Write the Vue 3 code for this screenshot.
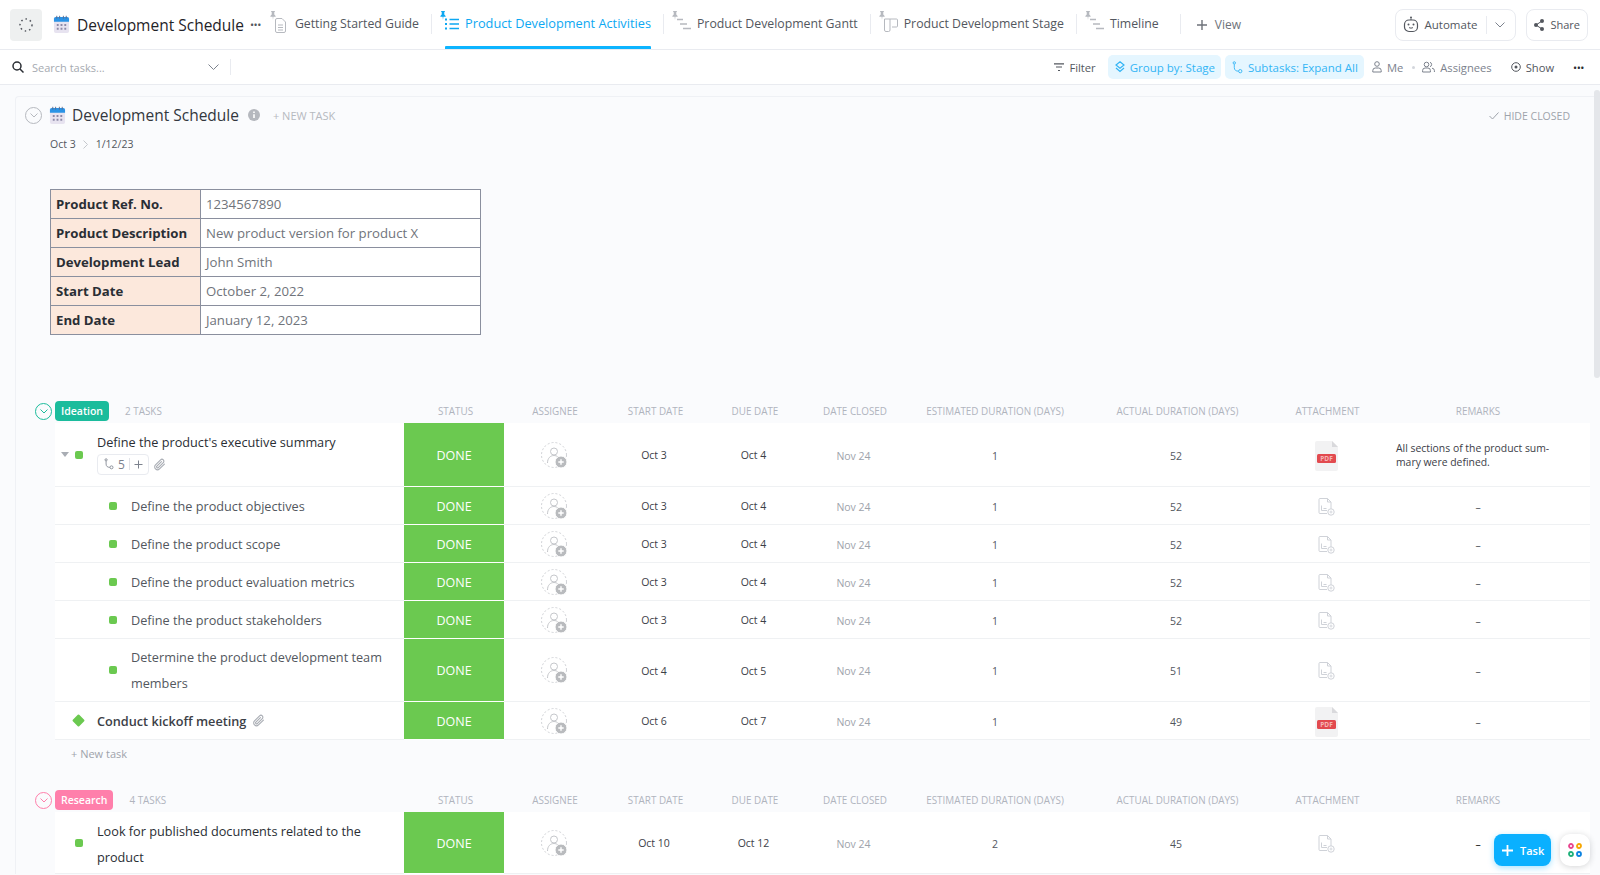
<template>
<div class="page">
    <svg class="defs" width="0" height="0">
        <symbol id="pin" viewBox="0 0 8 12">
            <path d="M1.5 0h5v1l-.8.6v3L7.5 6.500v1h-3L4 12l-.5-4.500h-3v-1l1.800-1.900v-3L1.500 1z" fill="currentColor" />
        </symbol>
        <symbol id="person" viewBox="0 0 28 28">
            <circle cx="13" cy="13" r="12.500" fill="none" stroke="#d0d2d6" stroke-dasharray="2 2" />
            <circle cx="13" cy="9.500" r="3.500" fill="#fff" stroke="#c5c7cb" />
            <path d="M6.500 21c0-5 3-7.500 6.500-7.500 1.500 0 2.800.4 3.800 1.200" fill="none" stroke="#c5c7cb" />
            <circle cx="20" cy="20" r="6" fill="#b9bbbe" stroke="#fff" />
            <path d="M20 17.300v5.400M17.300 20h5.400" stroke="#fff" stroke-width="1.400" />
        </symbol>
        <symbol id="clip" viewBox="0 0 14 14">
            <path d="M12.300 6.500 7 11.800a3 3 0 0 1-4.300-4.300l5.500-5.500a2 2 0 0 1 2.900 2.900L5.700 10.300a1 1 0 0 1-1.500-1.500l4.900-4.900" fill="none" stroke="#a9adb4" stroke-width="1.200" stroke-linecap="round" />
        </symbol>
        <symbol id="subtask" viewBox="0 0 12 14">
            <circle cx="2.500" cy="2" r="1.300" fill="none" stroke="currentColor" />
            <circle cx="9" cy="11" r="1.800" fill="none" stroke="currentColor" />
            <path d="M2.500 3.500V7c0 3 2 4 4.500 4" fill="none" stroke="currentColor" />
        </symbol>
        <symbol id="cal" viewBox="0 0 18 20">
            <rect x="1" y="2" width="16" height="17" rx="2" fill="#e7e3f0" />
            <path d="M1 7V4a2 2 0 0 1 2-2h12a2 2 0 0 1 2 2v3z" fill="#2a93e6" />
            <path d="M4 .8v3M7 .8v3M11 .8v3M14 .8v3" stroke="#5c6a8c" />
            <path d="M4 9.500h2v2H4zM8 9.500h2v2H8zM12 9.500h2v2h-2zM4 13.500h2v2H4zM8 13.500h2v2H8zM12 13.500h2v2h-2z" fill="#8d8aa8" />
        </symbol>
        <symbol id="file" viewBox="0 0 17 18">
            <path d="M2 .5h7.500L13 4v7M9.500.5V4H13M9 15.500H2A1 1 0 0 1 1 14.500V1.500A1 1 0 0 1 2 .5" fill="none" stroke="#cfd2d8" />
            <path d="M3.500 7.500v5h5.500M5.500 10.500h3" fill="none" stroke="#cfd2d8" />
            <circle cx="13" cy="14" r="3.200" fill="#fff" stroke="#cfd2d8" />
            <path d="M13 12.500v3M11.500 14h3" stroke="#cfd2d8" stroke-width=".8" />
        </symbol>
    </svg>

    <header class="topbar">
        <div class="logo">
            <svg width="14" height="14" viewBox="0 0 14 14">
                <circle cx="7" cy="7" r="6" fill="none" stroke="#53575e" stroke-width="1.500" stroke-dasharray="1.500 3" />
            </svg>
        </div>
        <svg class="title-cal" width="17" height="19"><use href="#cal" /></svg>
        <span class="title">Development Schedule</span>
        <span class="more">•••</span>
        <nav class="tabs">
            <div
                v-for="tab in tabs"
                :key="tab.name"
                class="tab"
                :class="{ active: tab.active }"
            >
                <div class="tab-inner">
                    <span class="tab-icon">
                        <svg class="tab-pin" width="6" height="9"><use href="#pin" /></svg>
                        <svg v-if="tab.icon === 'doc'" class="glyph" width="11" height="15" viewBox="0 0 11 15">
                            <path d="M2 .5h5l3.500 3.500v9a1.500 1.500 0 0 1-1.500 1.500H2A1.500 1.500 0 0 1 .5 13V2A1.500 1.500 0 0 1 2 .5zM3 7h5M3 9.500h5M3 12h5" fill="none" stroke="currentColor" />
                        </svg>
                        <svg v-else-if="tab.icon === 'list'" class="glyph" width="14" height="12" viewBox="0 0 14 12">
                            <path d="M4.500 1.500H14M4.500 6H14M4.500 10.500H14" stroke="currentColor" stroke-width="1.400" />
                            <path d="M0 .5h2v2H0zM0 5h2v2H0zM0 9.500h2v2H0z" fill="currentColor" />
                        </svg>
                        <svg v-else-if="tab.icon === 'gantt'" class="glyph" width="14" height="12" viewBox="0 0 14 12">
                            <path d="M0 1.500h6M3 6h7M6 10.500h8" stroke="currentColor" stroke-width="1.300" />
                        </svg>
                        <svg v-else class="glyph" width="14" height="15" viewBox="0 0 14 15">
                            <path d="M.5 1h5.500v11a1.500 1.500 0 0 1-1.500 1.500h-2.500A1.500 1.500 0 0 1 .5 12zM6 1h6.500a1 1 0 0 1 1 1v6a1 1 0 0 1-1 1H8" fill="none" stroke="currentColor" />
                        </svg>
                    </span>
                    <span class="tab-label">{{ tab.name }}</span>
                </div>
            </div>
            <div class="add-view">
                <svg width="10" height="10" viewBox="0 0 10 10"><path d="M5 0v10M0 5h10" stroke="#6e7279" stroke-width="1.400" /></svg>
                <span>View</span>
            </div>
        </nav>
        <div class="top-actions">
            <div class="automate">
                <span class="automate-main">
                    <svg width="16" height="17" viewBox="0 0 16 17">
                        <circle cx="8" cy="1.500" r="1" fill="#53575e" />
                        <path d="M8 2.500v1.500" stroke="#53575e" />
                        <rect x="1.500" y="4" width="13" height="11.500" rx="4.500" fill="none" stroke="#53575e" stroke-width="1.200" />
                        <circle cx="5.500" cy="8.500" r="1" fill="#53575e" />
                        <circle cx="10.500" cy="8.500" r="1" fill="#53575e" />
                        <path d="M6 11.500c1 .8 3 .8 4 0" fill="none" stroke="#53575e" />
                    </svg>
                    Automate
                </span>
                <span class="automate-arrow">
                    <svg width="10" height="6" viewBox="0 0 10 6"><path d="M.5.5 5 5 9.500.5" fill="none" stroke="#7c828d" /></svg>
                </span>
            </div>
            <div class="share">
                <svg width="10" height="12" viewBox="0 0 10 12">
                    <circle cx="8" cy="2" r="2" fill="#53575e" />
                    <circle cx="2" cy="6" r="2" fill="#53575e" />
                    <circle cx="8" cy="10" r="2" fill="#53575e" />
                    <path d="M8 2 2 6l6 4" fill="none" stroke="#53575e" />
                </svg>
                Share
            </div>
        </div>
    </header>

    <div class="toolbar">
        <svg class="search-icon" width="12" height="12" viewBox="0 0 12 12">
            <circle cx="5" cy="5" r="4" fill="none" stroke="#2a2e34" stroke-width="1.500" />
            <path d="m8 8 3.500 3.500" stroke="#2a2e34" stroke-width="1.500" />
        </svg>
        <span class="search-text">Search tasks...</span>
        <svg class="search-chevron" width="11" height="7" viewBox="0 0 11 7"><path d="M.5.5l5 5 5-5" fill="none" stroke="#7c828d" /></svg>
        <span class="search-divider"></span>

        <div class="tools">
            <span class="tool filter">
                <svg width="10" height="9" viewBox="0 0 10 9"><path d="M0 .8h10M2 4h6M4 7.500h2" stroke="#53575e" stroke-width="1.200" /></svg>
                Filter
            </span>
            <span class="pill group-pill">
                <svg width="10" height="12" viewBox="0 0 10 12">
                    <path d="M5 .8 9 4 5 7.200 1 4zM1 7l4 3.500L9 7" fill="none" stroke="currentColor" stroke-width="1.200" />
                </svg>
                Group by: Stage
            </span>
            <span class="pill sub-pill">
                <svg width="11" height="13"><use href="#subtask" /></svg>
                Subtasks: Expand All
            </span>
            <span class="tool me">
                <svg width="10" height="12" viewBox="0 0 10 12">
                    <circle cx="5" cy="3" r="2.300" fill="none" stroke="#7c828d" />
                    <path d="M.8 11V9.500A2.500 2.500 0 0 1 3.300 7h3.400a2.500 2.500 0 0 1 2.500 2.500V11z" fill="none" stroke="#7c828d" />
                </svg>
                Me
            </span>
            <span class="dot"></span>
            <span class="tool assignees">
                <svg width="13" height="12" viewBox="0 0 13 12">
                    <circle cx="4.500" cy="3.500" r="2.300" fill="none" stroke="#7c828d" />
                    <path d="M.6 11V9.500A2.500 2.500 0 0 1 3.100 7h2.800a2.500 2.500 0 0 1 2.500 2.500V11zM8 1.300a2.300 2.300 0 0 1 0 4.400M10 7.200a2.500 2.500 0 0 1 2.400 2.300V11" fill="none" stroke="#7c828d" />
                </svg>
                Assignees
            </span>
            <span class="tool show">
                <svg width="10" height="10" viewBox="0 0 10 10">
                    <circle cx="5" cy="5" r="4.300" fill="none" stroke="#53575e" />
                    <circle cx="5" cy="5" r="1.500" fill="#53575e" />
                </svg>
                Show
            </span>
            <span class="tool-more">•••</span>
        </div>
    </div>

    <main class="main">
        <section class="card">
            <div class="card-head">
                <span class="collapse grey">
                    <svg width="8" height="5" viewBox="0 0 8 5"><path d="M.5.5 4 4 7.500.5" fill="none" stroke="currentColor" /></svg>
                </span>
                <svg class="head-cal" width="17" height="19"><use href="#cal" /></svg>
                <h1>Development Schedule</h1>
                <svg class="info" width="12" height="12" viewBox="0 0 12 12">
                    <circle cx="6" cy="6" r="6" fill="#b5b8be" />
                    <path d="M6 5.200v3.800M6 2.600v1.400" stroke="#fff" stroke-width="1.600" />
                </svg>
                <span class="new-task-top">+ NEW TASK</span>
                <span class="hide-closed">
                    <svg width="10" height="8" viewBox="0 0 10 8"><path d="m.5 4 3 3 6-6.500" fill="none" stroke="#9ea3ab" /></svg>
                    HIDE CLOSED
                </span>
            </div>
            <div class="dates">
                <span>Oct 3</span>
                <svg width="5" height="9" viewBox="0 0 5 9"><path d="m.5.5 4 4-4 4" fill="none" stroke="#c4c7cc" /></svg>
                <span>1/12/23</span>
            </div>

            <table class="info-table">
                <tbody>
                    <tr v-for="item in summary" :key="item.label">
                        <th>{{ item.label }}</th>
                        <td>{{ item.value }}</td>
                    </tr>
                </tbody>
            </table>

            <div v-for="group in groups" :key="group.name" class="group" :class="group.theme">
                <div class="grid group-head">
                    <div class="group-name">
                        <span class="collapse">
                            <svg width="8" height="5" viewBox="0 0 8 5"><path d="M.5.5 4 4 7.500.5" fill="none" stroke="currentColor" /></svg>
                        </span>
                        <span class="group-pill-name">{{ group.name }}</span>
                        <span class="task-count">{{ group.count }} TASKS</span>
                    </div>
                    <span v-for="col in columns" :key="col" class="col-head">{{ col }}</span>
                </div>

                <div
                    v-for="task in group.tasks"
                    :key="task.name"
                    class="grid row"
                    :class="{ tall: task.tall, summary: task.badge }"
                >
                    <div class="name-cell" :class="task.kind">
                        <svg v-if="task.badge" class="caret" width="8" height="5" viewBox="0 0 8 5"><path d="M0 0h8L4 5z" fill="#a9adb4" /></svg>
                        <span class="bullet"></span>
                        <div class="name-body">
                            <div class="name-line">
                                <span class="name">{{ task.name }}</span>
                                <svg v-if="task.clip" class="clip" width="13" height="13"><use href="#clip" /></svg>
                            </div>
                            <div v-if="task.badge" class="badges">
                                <span class="sub-badge">
                                    <svg width="10" height="12"><use href="#subtask" /></svg>
                                    <span>{{ task.badge }}</span>
                                    <i></i>
                                    <svg width="9" height="9" viewBox="0 0 9 9"><path d="M4.500.5v8M.5 4.500h8" stroke="#7c828d" /></svg>
                                </span>
                                <svg class="clip" width="13" height="13"><use href="#clip" /></svg>
                            </div>
                        </div>
                    </div>
                    <div class="status">DONE</div>
                    <div class="cell">
                        <svg width="28" height="28"><use href="#person" /></svg>
                    </div>
                    <div class="cell date nudge">{{ task.start }}</div>
                    <div class="cell date nudge">{{ task.due }}</div>
                    <div class="cell closed nudge">{{ task.closed }}</div>
                    <div class="cell num">{{ task.est }}</div>
                    <div class="cell num nudge">{{ task.actual }}</div>
                    <div class="cell nudge">
                        <svg v-if="task.pdf" width="23" height="30" viewBox="0 0 23 30">
                            <path d="M2 0h15l6 6v22a2 2 0 0 1-2 2H2a2 2 0 0 1-2-2V2a2 2 0 0 1 2-2z" fill="#f2f2f3" />
                            <path d="M17 0l6 6h-6z" fill="#d9d9dc" />
                            <rect x="2" y="13" width="19" height="9" rx="1.500" fill="#e24a4f" />
                            <text x="11.500" y="20" text-anchor="middle" font-size="6.500" font-weight="700" fill="#f5b5b5" font-family="Open Sans, sans-serif">PDF</text>
                        </svg>
                        <svg v-else width="17" height="18"><use href="#file" /></svg>
                    </div>
                    <div class="cell" :class="task.remark ? 'remark' : 'dash'">{{ task.remark || '–' }}</div>
                </div>

                <div v-if="group.showNew" class="new-task">+ New task</div>
            </div>
        </section>
    </main>

    <div class="scrollbar"></div>

    <div class="fab">
        <button class="fab-task">
            <svg width="11" height="11" viewBox="0 0 11 11"><path d="M5.500 0v11M0 5.500h11" stroke="#fff" stroke-width="1.800" /></svg>
            Task
        </button>
        <button class="fab-apps">
            <svg width="14" height="14" viewBox="0 0 14 14">
                <circle cx="3" cy="3" r="2" fill="#fff" stroke="#e8458f" stroke-width="1.800" />
                <circle cx="11" cy="3" r="2" fill="#fff" stroke="#f7a600" stroke-width="1.800" />
                <circle cx="3" cy="11" r="2" fill="#fff" stroke="#1eb07a" stroke-width="1.800" />
                <circle cx="11" cy="11" r="2" fill="#fff" stroke="#0b82e0" stroke-width="1.800" />
            </svg>
        </button>
    </div>
</div>
</template>

<script setup>
const tabs = [
    { name: 'Getting Started Guide', icon: 'doc' },
    { name: 'Product Development Activities', icon: 'list', active: true },
    { name: 'Product Development Gantt', icon: 'gantt' },
    { name: 'Product Development Stage', icon: 'board' },
    { name: 'Timeline', icon: 'gantt' }
];

const summary = [
    { label: 'Product Ref. No.', value: '1234567890' },
    { label: 'Product Description', value: 'New product version for product X' },
    { label: 'Development Lead', value: 'John Smith' },
    { label: 'Start Date', value: 'October 2, 2022' },
    { label: 'End Date', value: 'January 12, 2023' }
];

const columns = [
    'Status',
    'Assignee',
    'Start date',
    'Due date',
    'Date closed',
    'Estimated duration (days)',
    'Actual duration (days)',
    'Attachment',
    'Remarks'
];

const subtask = (name, start, due, actual, tall) => ({
    name, start, due, actual, tall,
    kind: 'child',
    closed: 'Nov 24',
    est: 1
});

const groups = [
    {
        name: 'Ideation',
        theme: 'teal',
        count: 2,
        showNew: true,
        tasks: [
            {
                name: "Define the product's executive summary",
                kind: 'parent',
                badge: 5,
                start: 'Oct 3',
                due: 'Oct 4',
                closed: 'Nov 24',
                est: 1,
                actual: 52,
                pdf: true,
                remark: 'All sections of the product sum-\nmary were defined.'
            },
            subtask('Define the product objectives', 'Oct 3', 'Oct 4', 52),
            subtask('Define the product scope', 'Oct 3', 'Oct 4', 52),
            subtask('Define the product evaluation metrics', 'Oct 3', 'Oct 4', 52),
            subtask('Define the product stakeholders', 'Oct 3', 'Oct 4', 52),
            subtask('Determine the product development team members', 'Oct 4', 'Oct 5', 51, true),
            {
                name: 'Conduct kickoff meeting',
                kind: 'milestone',
                clip: true,
                start: 'Oct 6',
                due: 'Oct 7',
                closed: 'Nov 24',
                est: 1,
                actual: 49,
                pdf: true
            }
        ]
    },
    {
        name: 'Research',
        theme: 'pink',
        count: 4,
        tasks: [
            {
                name: 'Look for published documents related to the product',
                kind: 'parent',
                tall: true,
                start: 'Oct 10',
                due: 'Oct 12',
                closed: 'Nov 24',
                est: 2,
                actual: 45
            }
        ]
    }
];
</script>

<style>
html, body {
    margin: 0;
    height: 100%;
    overflow: hidden;
    background: #fff;
}
</style>

<style scoped>
.page {
    position: relative;
    height: 875px;
    overflow: hidden;
    font-family: "Open Sans", "Noto Sans", sans-serif;
    color: #2a2e34;
}

.defs {
    position: absolute;
}

.topbar {
    display: flex;
    align-items: center;
    height: 49px;
    padding: 0 12px 0 10px;
    border-bottom: 1px solid #e9ebf0;
    background: #fff;
}

.logo {
    display: flex;
    align-items: center;
    justify-content: center;
    width: 32px;
    height: 32px;
    border-radius: 4px;
    background: #eef0f0;
    flex: none;
}

.title-cal {
    margin-left: 11px;
    flex: none;
}

.title {
    margin-left: 7px;
    font-size: 15.500px;
    line-height: 20px;
    white-space: nowrap;
    color: #1f2329;
}

.more {
    margin-left: 6px;
    font-size: 11px;
    letter-spacing: -0.5px;
    color: #53575e;
}

.tabs {
    display: flex;
    align-items: stretch;
    height: 49px;
    margin-left: 1px;
}

.tab {
    display: flex;
    padding: 0 13px 0 8px;
    position: relative;
}

.tab:nth-child(5) {
    padding-right: 22px;
}

.tab::after {
    content: "";
    position: absolute;
    right: 0;
    top: 14px;
    height: 20px;
    width: 1px;
    background: #e9ebf0;
}

.tab-inner {
    position: relative;
    display: flex;
    align-items: center;
    height: 46px;
    padding-bottom: 3px;
}

.tab.active .tab-inner::after {
    content: "";
    position: absolute;
    left: 5px;
    right: 0;
    bottom: 0;
    height: 3px;
    border-radius: 1px 1px 0 0;
    background: #0db4ff;
}

.tab-icon {
    position: relative;
    display: block;
    width: 25px;
    height: 28px;
    color: #b6b9bf;
    flex: none;
}

.tab.active .tab-icon {
    color: #0da8f2;
}

.tab-pin {
    position: absolute;
    left: 0;
    top: 2px;
}

.glyph {
    position: absolute;
    left: 5px;
    top: 9px;
}

.tab-label {
    font-size: 12.300px;
    white-space: nowrap;
    color: #53575e;
}

.tab.active .tab-label {
    font-size: 12.750px;
    color: #0da8f2;
}

.add-view {
    display: flex;
    align-items: center;
    gap: 8px;
    margin-left: 16px;
    font-size: 12px;
    color: #6e7279;
}

.top-actions {
    display: flex;
    align-items: center;
    gap: 10px;
    margin-left: auto;
}

.automate,
.share {
    display: flex;
    align-items: center;
    height: 30px;
    border: 1px solid #e9ebf0;
    border-radius: 8px;
    font-size: 11.500px;
    color: #53575e;
    background: #fff;
}

.automate-main {
    display: flex;
    align-items: center;
    gap: 6px;
    padding: 0 9px 0 7px;
    height: 100%;
}

.automate-arrow {
    display: flex;
    align-items: center;
    padding: 0 10px 0 8px;
    height: 18px;
    border-left: 1px solid #e9ebf0;
}

.share {
    gap: 6px;
    padding: 0 7px 0 7px;
    font-size: 11px;
}

.toolbar {
    display: flex;
    align-items: center;
    height: 34px;
    padding: 0 16px 0 12px;
    border-bottom: 1px solid #e9ebf0;
    background: #fff;
}

.search-icon {
    flex: none;
}

.search-text {
    margin-left: 8px;
    width: 176px;
    font-size: 11px;
    color: #a6aab1;
}

.search-chevron {
    flex: none;
}

.search-divider {
    width: 1px;
    height: 16px;
    margin-left: 11px;
    background: #e9ebf0;
}

.tools {
    display: flex;
    align-items: center;
    margin-left: auto;
    font-size: 11.200px;
    color: #53575e;
}

.tool {
    display: flex;
    align-items: center;
    gap: 5px;
    white-space: nowrap;
}

.pill {
    display: flex;
    align-items: center;
    gap: 5px;
    height: 24px;
    padding: 0 6px 0 7px;
    border-radius: 5px;
    font-size: 11.500px;
    background: #e5f6ff;
    color: #33b5f5;
    white-space: nowrap;
}

.group-pill {
    margin-left: 12px;
}

.sub-pill {
    margin-left: 4px;
}

.me {
    margin-left: 8px;
    color: #7c828d;
}

.dot {
    width: 3px;
    height: 3px;
    margin: 0 7px 0 9px;
    border-radius: 50%;
    background: #d3d6dc;
}

.assignees {
    color: #7c828d;
}

.show {
    margin-left: 19px;
}

.tool-more {
    margin-left: 19px;
    font-size: 11px;
    letter-spacing: -0.5px;
    color: #2a2e34;
}

.main {
    height: 790px;
    padding: 11px 0 0 15px;
    box-sizing: border-box;
    background: #fafbfd;
}

.card {
    padding: 8px 10px 0 0;
    border-top: 1px solid #eff1f5;
    border-left: 1px solid #eff1f5;
    border-radius: 4px 0 0 0;
}

.card-head {
    display: flex;
    align-items: center;
    height: 20px;
}

.collapse {
    display: flex;
    align-items: center;
    justify-content: center;
    width: 15px;
    height: 15px;
    border: 1px solid currentColor;
    border-radius: 50%;
    flex: none;
}

.collapse.grey {
    margin-left: 9px;
    color: #b6b9bf;
}

.head-cal {
    margin-left: 7px;
}

h1 {
    margin: 0 0 0 6px;
    font-size: 15.500px;
    font-weight: 400;
    color: #33373d;
    white-space: nowrap;
}

.info {
    margin-left: 9px;
}

.new-task-top {
    margin-left: 13px;
    font-size: 11px;
    color: #b6b9bf;
}

.hide-closed {
    display: flex;
    align-items: center;
    gap: 5px;
    margin-left: auto;
    margin-right: 20px;
    padding-top: 2px;
    font-size: 10.500px;
    color: #9ea3ab;
}

.dates {
    display: flex;
    align-items: center;
    gap: 7.500px;
    height: 16px;
    margin: 11px 0 0 34px;
    font-size: 10.500px;
    color: #53575e;
}

.info-table {
    margin: 37px 0 0 34px;
    border-collapse: collapse;
    font-size: 13.200px;
    table-layout: fixed;
    width: 431px;
    background: #fff;
}

.info-table th,
.info-table td {
    height: 28px;
    padding: 0 0 0 5px;
    border: 1px solid #8a8f9e;
    text-align: left;
    white-space: nowrap;
}

.info-table th {
    width: 144px;
    background: #fce8dc;
    font-weight: 700;
    color: #2a2e34;
}

.info-table td {
    color: #70747b;
}

.group {
    margin: 66px 0 0 39px;
}

.group + .group {
    margin-top: 22px;
}

.grid {
    display: grid;
    grid-template-columns: 349px 100px 102px 99px 100px 100px 180px 185px 115px 186px 19px;
}

.group-head {
    height: 22px;
    padding-bottom: 2px;
    box-sizing: border-box;
}

.group-name {
    display: flex;
    align-items: center;
    height: 20px;
}

.group-name .collapse {
    margin-left: -20px;
    margin-right: 3px;
}

.teal .collapse {
    color: #1bbc9c;
}

.pink .collapse {
    color: #ff7fab;
}

.group-pill-name {
    height: 20px;
    padding: 0 6px;
    border-radius: 4px;
    font-size: 10.500px;
    font-weight: 600;
    line-height: 20px;
    color: #fff;
}

.teal .group-pill-name {
    background: #1bbc9c;
}

.pink .group-pill-name {
    background: #ff7fab;
}

.task-count {
    margin-left: 16px;
    font-size: 9.900px;
    color: #b0b4bd;
}

.col-head {
    display: flex;
    align-items: center;
    justify-content: center;
    height: 20px;
    font-size: 9.900px;
    text-transform: uppercase;
    white-space: nowrap;
    color: #b0b4bd;
}

.col-head:nth-child(2) {
    padding-left: 3px;
}

.row {
    min-height: 38px;
    background: linear-gradient(#fff, #fff) left / 1535px 100% no-repeat;
    border-bottom: 1px solid #eff1f3;
    box-sizing: border-box;
}

.row.tall {
    min-height: 63px;
}

.row.summary {
    min-height: 64px;
}

.pink .row.tall {
    min-height: 62px;
}

.pink .name-body {
    padding-top: 2px;
}

.name-cell {
    display: flex;
    align-items: center;
    font-size: 12.700px;
    color: #53575e;
}

.name-cell.parent {
    padding-left: 20px;
    color: #2a2e34;
}

.name-cell.child {
    padding-left: 54px;
}

.name-cell.milestone {
    padding-left: 19px;
    color: #3c4047;
    font-weight: 600;
}

.caret {
    margin: 0 -8px 0 -14px;
    flex: none;
}

.caret + .bullet {
    margin-left: 14px;
}

.bullet {
    width: 8px;
    height: 8px;
    margin-right: 14px;
    border-radius: 2px;
    background: #6bc950;
    flex: none;
}

.milestone .bullet {
    width: 9px;
    height: 9px;
    transform: rotate(45deg);
    border-radius: 1px;
}

.name-body {
    min-width: 0;
    padding-right: 12px;
}

.name-line {
    display: flex;
    align-items: center;
    gap: 6px;
    line-height: 26px;
}

.badges {
    display: flex;
    align-items: center;
    gap: 4px;
    margin-top: -1px;
    margin-bottom: 6px;
}

.sub-badge {
    display: flex;
    align-items: center;
    gap: 4px;
    height: 19px;
    padding: 0 5px 0 6px;
    border: 1px solid #e9ebf0;
    border-radius: 4px;
    font-size: 12px;
    color: #7c828d;
}

.sub-badge i {
    width: 1px;
    height: 12px;
    background: #e1e3e8;
}

.clip {
    flex: none;
}

.status {
    display: flex;
    align-items: center;
    justify-content: center;
    padding-top: 1px;
    background: #6bc950;
    border-bottom: 1px solid #fff;
    margin-bottom: -1px;
    font-size: 12.500px;
    color: #fff;
}

.cell {
    display: flex;
    align-items: center;
    justify-content: center;
    padding-top: 2px;
    font-size: 10.500px;
}

.nudge {
    padding-right: 3px;
}

.date {
    padding-top: 1px;
    color: #3c4047;
}

.closed {
    color: #9ea3ab;
}

.num {
    color: #53575e;
}

.remark {
    justify-content: flex-start;
    padding-left: 11px;
    padding-top: 0;
    font-size: 10.400px;
    line-height: 14px;
    white-space: pre-line;
    color: #3c4047;
}

.dash {
    color: #53575e;
}

.pink .dash {
    color: #111;
}

.new-task {
    height: 28px;
    padding-left: 16px;
    font-size: 11px;
    line-height: 28px;
    color: #9ea3ab;
}

.scrollbar {
    position: absolute;
    right: 0;
    top: 90px;
    width: 6px;
    height: 288px;
    border-radius: 3px;
    background: #e4e6ea;
}

.fab {
    position: absolute;
    right: 10px;
    bottom: 9px;
    display: flex;
    gap: 9px;
}

.fab button {
    height: 32px;
    border: 0;
    font-family: inherit;
}

.fab-task {
    display: flex;
    align-items: center;
    gap: 7px;
    width: 57px;
    padding: 0 0 0 8px;
    border-radius: 8px;
    background: #0ab0ff;
    box-shadow: 0 2px 6px rgba(10, 176, 255, 0.35);
    font-size: 11px;
    font-weight: 600;
    color: #fff;
}

.fab-apps {
    display: flex;
    align-items: center;
    justify-content: center;
    width: 30px;
    padding: 0;
    border-radius: 10px;
    background: #fff;
    box-shadow: 0 1px 6px rgba(42, 46, 52, 0.2);
}
</style>
